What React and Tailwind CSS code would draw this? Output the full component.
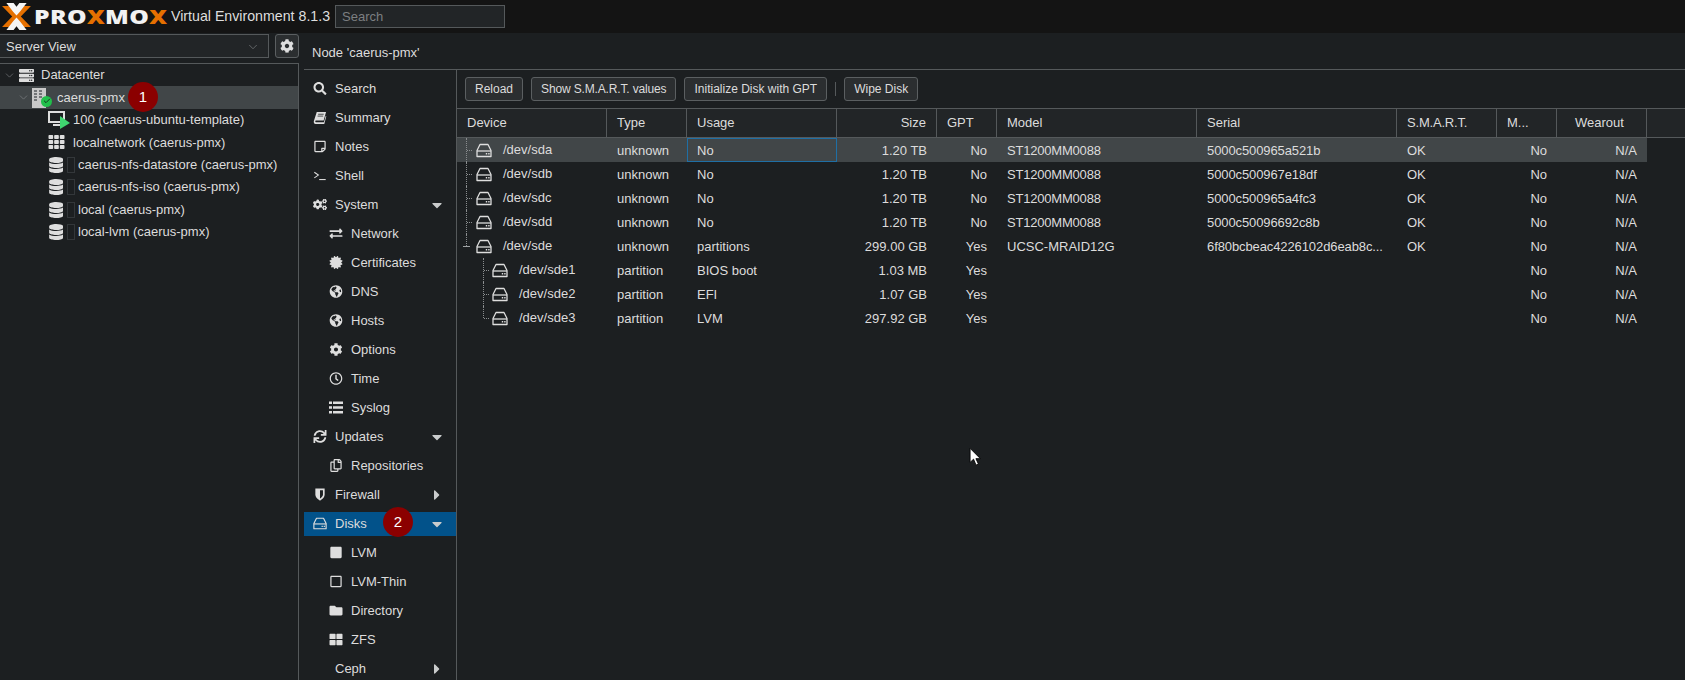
import React from "react";
import { ChevronDown, Check } from "lucide-react";
import {
  FaSearch, FaRegStickyNote, FaCogs, FaExchangeAlt, FaCertificate, FaGlobeAmericas,
  FaCog, FaRegClock, FaSync, FaRegCopy, FaSquare, FaRegSquare,
  FaFolder, FaThLarge, FaTh, FaDatabase, FaServer, FaCaretDown, FaCaretRight,
} from "react-icons/fa";

const FONT = "font-['Liberation_Sans',Arial,sans-serif]";

const menu = [
  { label: "Search", icon: FaSearch },
  { label: "Summary", icon: BookIcon },
  { label: "Notes", icon: FaRegStickyNote },
  { label: "Shell", icon: TerminalIcon },
  { label: "System", icon: FaCogs, caret: "down" },
  { label: "Network", icon: FaExchangeAlt, sub: true },
  { label: "Certificates", icon: FaCertificate, sub: true },
  { label: "DNS", icon: FaGlobeAmericas, sub: true },
  { label: "Hosts", icon: FaGlobeAmericas, sub: true },
  { label: "Options", icon: FaCog, sub: true },
  { label: "Time", icon: FaRegClock, sub: true },
  { label: "Syslog", icon: ListIcon, sub: true },
  { label: "Updates", icon: FaSync, caret: "down" },
  { label: "Repositories", icon: FaRegCopy, sub: true },
  { label: "Firewall", icon: ShieldIcon, caret: "right" },
  { label: "Disks", icon: HddIcon, caret: "down", active: true },
  { label: "LVM", icon: FaSquare, sub: true },
  { label: "LVM-Thin", icon: FaRegSquare, sub: true },
  { label: "Directory", icon: FaFolder, sub: true },
  { label: "ZFS", icon: FaThLarge, sub: true },
  { label: "Ceph", caret: "right" },
];

const columns = [
  { label: "Device", cls: "px-[10px]" },
  { label: "Type", cls: "px-[10px]" },
  { label: "Usage", cls: "px-[10px]" },
  { label: "Size", cls: "justify-end px-[10px]" },
  { label: "GPT", cls: "px-[10px]" },
  { label: "Model", cls: "px-[10px]" },
  { label: "Serial", cls: "px-[10px]" },
  { label: "S.M.A.R.T.", cls: "px-[10px] tracking-[-0.2px]" },
  { label: "M...", cls: "px-[10px]" },
  { label: "Wearout", cls: "pl-[18px]" },
];

const disks = [
  ["/dev/sda", "unknown", "No", "1.20 TB", "No", "ST1200MM0088", "5000c500965a521b", "OK"],
  ["/dev/sdb", "unknown", "No", "1.20 TB", "No", "ST1200MM0088", "5000c500967e18df", "OK"],
  ["/dev/sdc", "unknown", "No", "1.20 TB", "No", "ST1200MM0088", "5000c500965a4fc3", "OK"],
  ["/dev/sdd", "unknown", "No", "1.20 TB", "No", "ST1200MM0088", "5000c50096692c8b", "OK"],
  ["/dev/sde", "unknown", "partitions", "299.00 GB", "Yes", "UCSC-MRAID12G", "6f80bcbeac4226102d6eab8c...", "OK"],
  ["/dev/sde1", "partition", "BIOS boot", "1.03 MB", "Yes", "", "", ""],
  ["/dev/sde2", "partition", "EFI", "1.07 GB", "Yes", "", "", ""],
  ["/dev/sde3", "partition", "LVM", "297.92 GB", "Yes", "", "", ""],
];

function TerminalIcon({ className }) {
  return (
    <svg viewBox="0 0 16 16" className={className} fill="none" stroke="currentColor" strokeWidth="1.3">
      <path d="M1 4l5 3.500L1 11" />
      <path d="M7 13h8" />
    </svg>
  );
}

function BookIcon({ className }) {
  return (
    <svg viewBox="0 0 14 14" className={className} fill="currentColor">
      <path d="M3.500 1h10l-2.600 9.300H2.600c-.9 0-1.100 1.700 0 1.700h8.600l2-6.800.6.500-2.200 8.300H2.200C.6 14 0 12.300.4 10.800z" />
      <path d="M5 3.500h6M4.400 5.500h6" stroke="#1c1f21" strokeWidth="0.8" />
    </svg>
  );
}

function ListIcon({ className }) {
  return (
    <svg viewBox="0 0 14 12" className={className} fill="currentColor">
      <path d="M0 0h3v2.500H0zM4 0h10v2.500H4zM0 4.700h3v2.500H0zM4 4.700h10v2.500H4zM0 9.400h3v2.500H0zM4 9.400h10v2.500H4z" />
    </svg>
  );
}

function ShieldIcon({ className }) {
  return (
    <svg viewBox="0 0 14 14" className={className} fill="currentColor">
      <path d="M2 .5h10v6.500c0 3.200-3 5.500-5 6.500-2-1-5-3.300-5-6.500z" />
      <path d="M7 2.500h3.200V7c0 1.900-1.700 3.300-3.200 4.200z" fill="#1c1f21" />
    </svg>
  );
}

function HddIcon({ className }) {
  return (
    <svg viewBox="0 0 16 14" className={className} fill="none" stroke="currentColor" strokeWidth="1.300">
      <path d="M4 1h8l3 6v6H1V7z" strokeLinejoin="round" />
      <path d="M1 7.500h14" />
      <path d="M9.800 10.200h1.400M12.200 10.200h1.400" strokeWidth="1.500" />
    </svg>
  );
}

function ProxmoxMark({ className }) {
  return (
    <svg viewBox="0 0 30 28" className={className}>
      <path d="M0 3h8l7 9 7-9h8L19.500 14 30 25h-8l-7-8-7 8H0l10.500-11z" fill="#e57000" />
      <path d="M4.500 0h7.500l3 4 3-4h7.500l-7 9-3.500 4-3.500-4zM15 15l3.500 4 7 9H18l-3-4-3 4H4.500l7-9z" fill="#f5f5f5" />
    </svg>
  );
}

function MouseCursor() {
  return (
    <svg viewBox="0 0 12 18" className="absolute left-[969px] top-[447px] h-[20px] w-[13px]">
      <path d="M1 1v13l3.200-3 2.300 5.500 2.200-1-2.300-5H10.500z" fill="#fff" stroke="#000" strokeWidth="0.8" />
    </svg>
  );
}

function Badge({ n, className }) {
  return (
    <span className={`absolute flex h-[30px] w-[30px] items-center justify-center rounded-full bg-[#8b0000] text-[15px] text-white ${className}`}>
      {n}
    </span>
  );
}

function NodeIcon() {
  return (
    <span className="relative h-[20px] w-[20px] shrink-0">
      <svg viewBox="0 0 14 20" className="absolute left-0 top-0 h-[20px] w-[14px]">
        <rect width="14" height="20" fill="#c9c9c9" />
        <path d="M2 3h3M7 3h3M2 6h3M7 6h3M2 9h3M7 9h3M2 12h3" stroke="#55595c" strokeWidth="1.300" />
      </svg>
      <span className="absolute left-[9px] top-[8px] flex h-[11px] w-[11px] items-center justify-center rounded-full bg-[#21bf4b]">
        <Check size={8} strokeWidth={3} className="text-[#14361f]" />
      </span>
    </span>
  );
}

function VmIcon() {
  return (
    <span className="relative h-[18px] w-[22px] shrink-0">
      <svg viewBox="0 0 22 18" className="h-[18px] w-[22px]">
        <path d="M1 1h15v10H1zM5 14h8" fill="none" stroke="#dedede" strokeWidth="2" />
        <path d="M12 5l10 7-10 6z" fill="#3fd56f" />
      </svg>
    </span>
  );
}

function StorageIcon() {
  return (
    <span className="flex w-[26px] shrink-0 items-center gap-[4px]">
      <FaDatabase className="h-[16px] w-[15px] text-[#dedede]" />
      <span className="h-[16px] w-[8px] border border-[#33373a]" />
    </span>
  );
}

function TreeRow({ pad, toggle, selected, icon, gap, children }) {
  return (
    <div className={`relative flex h-[22.400px] items-center ${pad} ${selected ? "bg-[#414648]" : ""}`}>
      {toggle && <ChevronDown size={13} strokeWidth={1} className="mr-[2px] shrink-0 text-[#8f9294]" />}
      {icon}
      <span className={`whitespace-nowrap ${gap}`}>{children}</span>
    </div>
  );
}

function Tree() {
  return (
    <div className="mt-[5px] h-full border-r border-t border-[#55595b] text-[#dcdcdc]">
      <TreeRow pad="pl-[3px]" toggle icon={<FaServer className="h-[15px] w-[17px] shrink-0 text-[#dedede]" />} gap="ml-[6px]">
        Datacenter
      </TreeRow>
      <TreeRow pad="pl-[17px]" toggle selected icon={<NodeIcon />} gap="ml-[5px]">
        caerus-pmx
        <Badge n="1" className="left-[128px] top-[-4px]" />
      </TreeRow>
      <TreeRow pad="pl-[48px]" icon={<VmIcon />} gap="ml-[3px]">100 (caerus-ubuntu-template)</TreeRow>
      <TreeRow pad="pl-[48px]" icon={<FaTh className="h-[16px] w-[17px] shrink-0 text-[#dedede]" />} gap="ml-[8px]">localnetwork (caerus-pmx)</TreeRow>
      <TreeRow pad="pl-[49px]" icon={<StorageIcon />} gap="ml-[3px]">caerus-nfs-datastore (caerus-pmx)</TreeRow>
      <TreeRow pad="pl-[49px]" icon={<StorageIcon />} gap="ml-[3px]">caerus-nfs-iso (caerus-pmx)</TreeRow>
      <TreeRow pad="pl-[49px]" icon={<StorageIcon />} gap="ml-[3px]">local (caerus-pmx)</TreeRow>
      <TreeRow pad="pl-[49px]" icon={<StorageIcon />} gap="ml-[3px]">local-lvm (caerus-pmx)</TreeRow>
    </div>
  );
}

function MenuItem({ item }) {
  const Icon = item.icon;
  return (
    <div className="relative flex h-[29px] items-center">
      <div className={`flex h-[24px] w-full items-center ${item.sub ? "pl-[25px]" : "pl-[9px]"} ${item.active ? "bg-[#02528a]" : ""}`}>
        <span className="flex w-[13px] shrink-0 items-center justify-center">
          {Icon && <Icon className="h-[13px] w-[14px] shrink-0 text-[#dedede]" />}
        </span>
        <span className="ml-[9px]">{item.label}</span>
        {item.caret === "down" && <FaCaretDown className="absolute left-[125px] h-[16px] w-[16px] text-[#c9cbcc]" />}
        {item.caret === "right" && <FaCaretRight className="absolute left-[125px] h-[16px] w-[16px] text-[#c9cbcc]" />}
      </div>
      {item.active && <Badge n="2" className="left-[79px] top-[-2px]" />}
    </div>
  );
}

function Btn({ children, tight }) {
  return (
    <button className={`flex h-[24px] items-center rounded-[3px] border border-[#5b5f61] bg-[#2b2e30] px-[9px] text-[12px] text-[#dcdcdc] ${tight ? "tracking-[-0.15px]" : ""}`}>
      {children}
    </button>
  );
}

function DeviceCell({ name, index }) {
  const child = index >= 5;
  const last = index === 7;
  return (
    <div className="relative flex h-full items-center">
      {/* tree connector */}
      {!child && (
        <>
          <span className={`absolute left-[9px] top-0 border-l border-dotted border-[#8a8d8f] ${index === 4 ? "h-1/2" : "h-full"}`} />
          {index === 4 ? (
            <span className="absolute left-[6px] top-1/2 w-[7px] border-t border-[#a0a3a5]" />
          ) : (
            <span className="absolute left-[10px] top-1/2 w-[5px] border-t border-dotted border-[#8a8d8f]" />
          )}
        </>
      )}
      {child && (
        <>
          <span className={`absolute left-[26px] top-0 border-l border-dotted border-[#8a8d8f] ${last ? "h-1/2" : "h-full"}`} />
          <span className="absolute left-[27px] top-1/2 w-[5px] border-t border-dotted border-[#8a8d8f]" />
        </>
      )}
      <HddIcon className={`h-[15px] w-[16px] shrink-0 text-[#dedede] ${child ? "ml-[35px]" : "ml-[19px]"}`} />
      <span className="ml-[11px]">{name}</span>
    </div>
  );
}

function DiskTable() {
  const gridCols = "grid grid-cols-[150px_80px_150px_100px_60px_200px_200px_100px_60px_90px]";
  const cell = "flex items-center px-[10px] pt-[1px]";
  const right = "flex items-center justify-end px-[10px] pt-[1px]";
  return (
    <div className="flex-1">
      <div className="flex h-[30px] border-y border-[#55595b] bg-[#222527]">
        <div className={gridCols}>
          {columns.map((c) => (
            <div key={c.label} className={`flex items-center border-r border-[#55595b] ${c.cls}`}>
              {c.label}
            </div>
          ))}
        </div>
      </div>
      <div className="w-[1190px]">
        {disks.map((d, i) => (
          <div key={d[0]} className={`${gridCols} h-[24px] ${i === 0 ? "bg-[#414648]" : ""}`}>
            <DeviceCell name={d[0]} index={i} />
            <div className={cell}>{d[1]}</div>
            <div className={`${cell} ${i === 0 ? "outline outline-1 -outline-offset-1 outline-[#1f6fa5]" : ""}`}>{d[2]}</div>
            <div className={right}>{d[3]}</div>
            <div className={right}>{d[4]}</div>
            <div className={`${cell} ${i < 4 ? "tracking-[-0.2px]" : ""}`}>{d[5]}</div>
            <div className={`${cell} tracking-[-0.1px]`}>{d[6]}</div>
            <div className={cell}>{d[7]}</div>
            <div className={right}>No</div>
            <div className={right}>N/A</div>
          </div>
        ))}
      </div>
    </div>
  );
}

export default function App() {
  return (
    <div className={`relative flex h-[680px] w-[1685px] flex-col overflow-hidden bg-[#1c1f21] text-[13px] text-[#dcdcdc] ${FONT}`}>
      {/* top bar */}
      <div className="flex h-[33px] shrink-0 items-center bg-[#141414]">
        <ProxmoxMark className="ml-[2px] h-[27px] w-[29px]" />
        <span className="ml-[3px] inline-block w-[135px] origin-left scale-x-[1.23] whitespace-nowrap font-['Open_Sans',sans-serif] text-[20px] font-extrabold tracking-[0.3px] text-[#f2f2f2]">
          PRO<span className="text-[#e57000]">X</span>MO<span className="text-[#e57000]">X</span>
        </span>
        <span className="ml-[2px] whitespace-nowrap text-[14.200px] text-[#dedede]">Virtual Environment 8.1.3</span>
        <div className="ml-[5px] flex h-[23px] w-[170px] items-center border border-[#55595b] bg-[#222527] px-[6px] text-[#7c7f81]">
          Search
        </div>
      </div>

      <div className="flex min-h-0 flex-1">
        {/* left column */}
        <div className="flex w-[304px] shrink-0 flex-col pt-[1px]">
          <div className="flex w-[299px] items-center">
            <div className="flex h-[24px] w-[269px] items-center justify-between border-y border-r border-[#55595b] bg-[#222527] pl-[6px] pr-[8px] pt-[1px]">
              Server View
              <ChevronDown size={14} strokeWidth={1} className="text-[#8f9294]" />
            </div>
            <div className="ml-[6px] flex h-[24px] w-[24px] items-center justify-center rounded-[3px] border border-[#5b5f61] bg-[#2b2e30]">
              <FaCog className="h-[14px] w-[14px] text-[#dedede]" />
            </div>
          </div>
          <div className="min-h-0 w-[299px] flex-1">
            <Tree />
          </div>
        </div>

        {/* right column */}
        <div className="flex min-w-0 flex-1 flex-col">
          <div className="flex h-[37px] shrink-0 items-center border-b border-[#55595b] pl-[8px] pt-[4px]">
            Node 'caerus-pmx'
          </div>
          <div className="flex min-h-0 flex-1">
            <div className="w-[153px] shrink-0 border-r border-[#55595b] pt-[4px]">
              {menu.map((m) => (
                <MenuItem key={m.label} item={m} />
              ))}
            </div>
            <div className="flex min-w-0 flex-1 flex-col">
              <div className="flex h-[38px] shrink-0 items-center gap-[8px] pl-[8px]">
                <Btn>Reload</Btn>
                <Btn tight>Show S.M.A.R.T. values</Btn>
                <Btn>Initialize Disk with GPT</Btn>
                <span className="h-[14px] border-l border-[#55595b]" />
                <Btn>Wipe Disk</Btn>
              </div>
              <DiskTable />
            </div>
          </div>
        </div>
      </div>
      <MouseCursor />
    </div>
  );
}
